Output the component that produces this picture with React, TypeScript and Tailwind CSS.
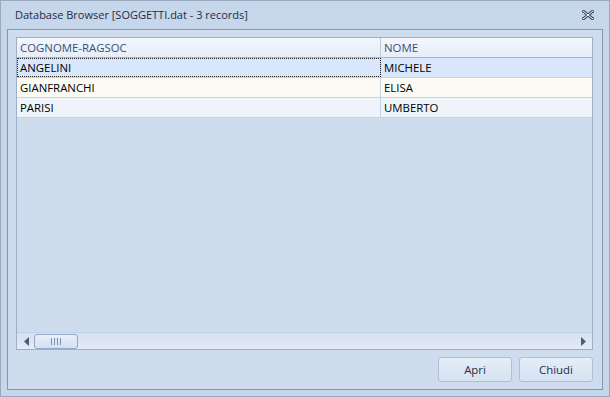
import React from 'react';

const rows = [
  ['ANGELINI', 'MICHELE'],
  ['GIANFRANCHI', 'ELISA'],
  ['PARISI', 'UMBERTO'],
];

const rowBg = ['bg-[#d8e7fb]', 'bg-[#fcfbf3]', 'bg-[#eff3fa]'];

export default function App() {
  return (
    <div
      className="w-[610px] h-[397px] flex flex-col border border-[#9aa9bd] bg-[#c6d6eb] text-[11.4px]"
      style={{ fontFamily: '"Open Sans", "Noto Sans", sans-serif' }}
    >
      <div className="h-[28px] flex items-center justify-between pl-[14px] pr-[15px] text-[#1f2d47] text-[11px]">
        <span>Database Browser [SOGGETTI.dat - 3 records]</span>
        <svg width="12" height="10" viewBox="0 0 12 10">
          <path d="M1 1 L11 9 M11 1 L1 9" stroke="#3b4a60" strokeWidth="3" strokeLinecap="square" />
          <path d="M1 1 L11 9 M11 1 L1 9" stroke="#ffffff" strokeWidth="1" strokeLinecap="square" />
        </svg>
      </div>
      <div className="flex-1 mx-[6px] mb-[6px] border border-[#8397b3] bg-[#cfdcee] flex flex-col pl-[8px] pr-[9px] pt-[7px] pb-[7px]">
        <div className="h-[313px] border border-[#9db0c9] flex flex-col bg-[#cfdcee]">
          <div className="flex h-[20px] bg-gradient-to-b from-[#f4f7fc] to-[#e6edf8] border-b border-[#a4b6ce] text-[#34507a]">
            <div className="w-[364px] pl-[3px] flex items-center border-r border-[#b9c9de]">COGNOME-RAGSOC</div>
            <div className="flex-1 pl-[3px] flex items-center">NOME</div>
          </div>
          {rows.map(([a, b], i) => (
            <div key={a} className={`flex h-[20px] border-b border-[#c3d4ea] text-black ${rowBg[i]}`}>
              <div
                className={`w-[364px] pl-[3px] flex items-center border-r border-[#c3d4ea] ${
                  i === 0 ? 'outline-1 outline-dotted outline-[#222] -outline-offset-1' : ''
                }`}
              >
                {a}
              </div>
              <div className="flex-1 pl-[3px] flex items-center">{b}</div>
            </div>
          ))}
          <div className="flex-1" />
          <div className="h-[17px] flex items-center border-t border-[#c2d1e5] bg-gradient-to-b from-[#d5e1f1] to-[#e3ebf6] pl-[7px] pr-[6px]">
            <svg width="5" height="9" viewBox="0 0 5 9">
              <path d="M5 0 L0 4.5 L5 9 Z" fill="#4a5a78" />
            </svg>
            <div className="ml-[5px] w-[44px] h-[15px] rounded-[3px] border border-[#93a9c8] bg-gradient-to-b from-[#e9f0f9] to-[#d3e0f1] flex items-center justify-center gap-[2px]">
              <span className="w-px h-[7px] bg-[#7d93b3]" />
              <span className="w-px h-[7px] bg-[#7d93b3]" />
              <span className="w-px h-[7px] bg-[#7d93b3]" />
              <span className="w-px h-[7px] bg-[#7d93b3]" />
            </div>
            <div className="flex-1" />
            <svg width="5" height="9" viewBox="0 0 5 9">
              <path d="M0 0 L5 4.5 L0 9 Z" fill="#4a5a78" />
            </svg>
          </div>
        </div>
        <div className="flex justify-end gap-[7px] mt-[7px]">
          <button className="w-[74px] h-[25px] rounded-[3px] border border-[#aebfd6] bg-gradient-to-b from-[#e5edf8] to-[#d6e2f2] text-[#1f2d47]">
            Apri
          </button>
          <button className="w-[74px] h-[25px] rounded-[3px] border border-[#aebfd6] bg-gradient-to-b from-[#e5edf8] to-[#d6e2f2] text-[#1f2d47]">
            Chiudi
          </button>
        </div>
      </div>
    </div>
  );
}
